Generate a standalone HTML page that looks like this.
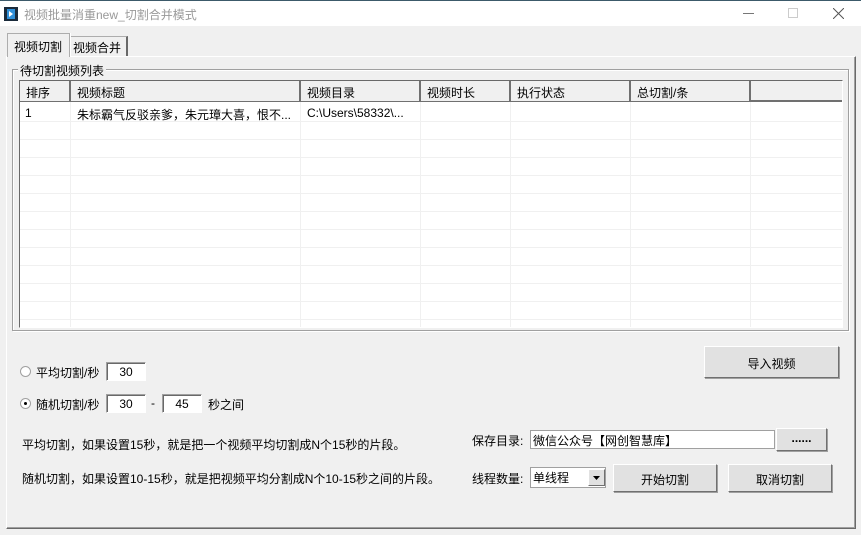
<!DOCTYPE html>
<html><head><meta charset="utf-8"><style>
*{box-sizing:border-box;margin:0;padding:0}
body{width:861px;height:535px;background:#f0f0f0;font-family:"Liberation Sans","Noto Sans CJK SC",sans-serif;font-size:12px;color:#000;position:relative;overflow:hidden}
.a{position:absolute;white-space:nowrap}
.title{left:0;top:0;width:861px;height:26px;background:#fff;border-top:1px solid #3c5a6a}
.btn{position:absolute;background:#e1e1e1;border:1px solid;border-color:#fff #707070 #707070 #fff;box-shadow:1px 1px 0 #a0a0a0;text-align:center;white-space:nowrap}
.inp{position:absolute;background:#fff;border:1px solid;border-color:#a0a0a0 #fff #fff #a0a0a0;box-shadow:inset 1px 1px 0 #696969;white-space:nowrap}
.hd{position:absolute;top:0;height:20px;border-right:2px solid #707070;padding:3px 6px;background:#f0f0f0;white-space:nowrap}
</style></head><body>
<div class="a title">
 <svg class="a" style="left:4px;top:6px" width="14" height="14"><rect x="0" y="0" width="14" height="14" fill="#1a2a3a"/><rect x="3" y="2" width="8" height="10" fill="#2f8fd8"/><path d="M5 4 L9 7 L5 10Z" fill="#fff"/></svg>
 <div class="a" style="left:24px;top:5px;color:#999;font-size:12px">视频批量消重new_切割合并模式</div>
 <div class="a" style="left:743px;top:12px;width:11px;height:1px;background:#777"></div>
 <div class="a" style="left:788px;top:7px;width:10px;height:10px;border:1px solid #ccc"></div>
 <svg class="a" style="left:833px;top:7px" width="11" height="11"><path d="M0 0L11 11M11 0L0 11" stroke="#555" stroke-width="1"/></svg>
</div>
<!-- tabs -->
<div class="a" style="left:7px;top:33px;width:63px;height:24px;border:1px solid #adadad;border-bottom:none;background:#f0f0f0;padding:4px 6px;z-index:2;box-shadow:1px 0 0 #fff">视频切割</div>
<div class="a" style="left:69px;top:36px;width:59px;height:20px;border:1px solid #adadad;border-right:2px solid #696969;border-bottom:none;padding:2px 3px">视频合并</div>
<div class="a" style="left:6px;top:56px;width:850px;height:473px;border:1px solid;border-color:#fff #696969 #696969 #fff;box-shadow:inset -1px -1px 0 #a0a0a0"></div>
<!-- group -->
<div class="a" style="left:12px;top:69px;width:837px;height:262px;border:1px solid #a0a0a0;box-shadow:inset 1px 1px 0 #fff,1px 1px 0 #fff"></div>
<div class="a" style="left:18px;top:62px;background:#f0f0f0;padding:0 2px">待切割视频列表</div>
<!-- listview -->
<div class="a" style="left:19px;top:80px;width:824px;height:248px;border:1px solid;border-color:#696969 #fff #fff #696969;background:#fff;overflow:hidden">
 <div class="a" style="left:0;top:0;width:822px;height:21px;background:#f0f0f0;border-bottom:2px solid #707070"></div>
 <div class="hd" style="left:0;width:51px">排序</div>
 <div class="hd" style="left:51px;width:230px">视频标题</div>
 <div class="hd" style="left:281px;width:120px">视频目录</div>
 <div class="hd" style="left:401px;width:90px">视频时长</div>
 <div class="hd" style="left:491px;width:120px">执行状态</div>
 <div class="hd" style="left:611px;width:120px">总切割/条</div>
 <svg class="a" style="left:0;top:21px" width="822" height="226">
  <g stroke="#f0f0f0" stroke-width="1">
   <path d="M0 19.5H822M0 37.5H822M0 55.5H822M0 73.5H822M0 91.5H822M0 109.5H822M0 127.5H822M0 145.5H822M0 163.5H822M0 181.5H822M0 199.5H822M0 217.5H822"/>
   <path d="M50.5 0V226M280.5 0V226M400.5 0V226M490.5 0V226M610.5 0V226M730.5 0V226"/>
  </g>
 </svg>
 <div class="a" style="left:5px;top:25px">1</div>
 <div class="a" style="left:57px;top:25px">朱标霸气反驳亲爹，朱元璋大喜，恨不...</div>
 <div class="a" style="left:287px;top:25px">C:\Users\58332\...</div>
</div>
<!-- radios -->
<div class="a" style="left:20px;top:366px;width:11px;height:11px;border-radius:50%;border:1px solid #a0a0a0;background:#fff"></div>
<div class="a" style="left:36px;top:364px">平均切割/秒</div>
<div class="inp" style="left:106px;top:362px;width:40px;height:19px;text-align:center;padding-top:2px">30</div>
<div class="a" style="left:20px;top:398px;width:11px;height:11px;border-radius:50%;border:1px solid #a0a0a0;background:#fff"><div class="a" style="left:3px;top:3px;width:3px;height:3px;background:#000;border-radius:50%"></div></div>
<div class="a" style="left:36px;top:396px">随机切割/秒</div>
<div class="inp" style="left:106px;top:394px;width:40px;height:19px;text-align:center;padding-top:2px">30</div>
<div class="a" style="left:151px;top:396px">-</div>
<div class="inp" style="left:162px;top:394px;width:40px;height:19px;text-align:center;padding-top:2px">45</div>
<div class="a" style="left:208px;top:396px">秒之间</div>
<div class="a" style="left:22px;top:436px">平均切割，如果设置15秒，就是把一个视频平均切割成N个15秒的片段。</div>
<div class="a" style="left:22px;top:470px">随机切割，如果设置10-15秒，就是把视频平均分割成N个10-15秒之间的片段。</div>
<!-- right -->
<div class="btn" style="left:704px;top:346px;width:135px;height:32px;padding-top:8px">导入视频</div>
<div class="a" style="left:472px;top:432px">保存目录:</div>
<div class="inp" style="left:530px;top:430px;width:245px;height:19px;padding:1px 2px;box-shadow:none;border-color:#a0a0a0">微信公众号【网创智慧库】</div>
<div class="btn" style="left:776px;top:428px;width:51px;height:23px;padding-top:2px;font-weight:bold">......</div>
<div class="a" style="left:472px;top:470px">线程数量:</div>
<div class="inp" style="left:530px;top:467px;width:76px;height:21px;box-shadow:none;border-color:#a0a0a0;padding:1px 2px">单线程</div>
<div class="btn" style="left:588px;top:469px;width:17px;height:17px;box-shadow:none"><svg width="15" height="15"><path d="M4 6H11L7.5 10Z" fill="#000"/></svg></div>
<div class="btn" style="left:613px;top:464px;width:104px;height:28px;padding-top:6px">开始切割</div>
<div class="btn" style="left:728px;top:464px;width:104px;height:28px;padding-top:6px">取消切割</div>
</body></html>
